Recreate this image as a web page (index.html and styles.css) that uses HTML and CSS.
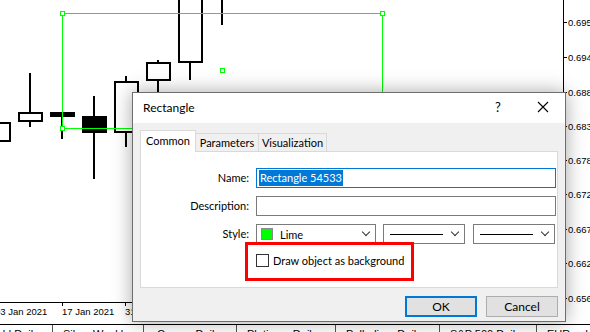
FILE: index.html
```html
<!DOCTYPE html>
<html lang="en">
<head>
	<meta charset="UTF-8">
	<title>Rectangle</title>
	<link rel="stylesheet" href="styles.css">
</head>
<body>
	<!-- chart -->
	<div class="chart">
		<svg class="plot" width="590" height="332" viewBox="0 0 590 332">
			<g class="candles" stroke="#000" stroke-width="2" fill="#fff">
				<rect x="-10" y="123" width="20" height="18"/>
				<line x1="30" y1="73" x2="30" y2="127"/>
				<rect x="19" y="113" width="23" height="8"/>
				<line x1="62" y1="113" x2="62" y2="139"/>
				<rect x="51" y="113" width="23" height="3" fill="#000"/>
				<line x1="94" y1="96" x2="94" y2="179"/>
				<rect x="83" y="117" width="23" height="15" fill="#000"/>
				<line x1="126" y1="76" x2="126" y2="147"/>
				<rect x="115" y="82" width="23" height="50"/>
				<line x1="158" y1="60" x2="158" y2="100"/>
				<rect x="147" y="63" width="23" height="17"/>
				<line x1="190" y1="0" x2="190" y2="80"/>
				<rect x="179" y="-5" width="23" height="67"/>
				<line x1="222" y1="0" x2="222" y2="25"/>
			</g>
			<g class="shape" stroke="#00ff00" stroke-width="1" fill="none">
				<rect x="62.5" y="13.5" width="320" height="115"/>
				<rect x="60.5" y="11.5" width="4" height="4" fill="#fff"/>
				<rect x="380.5" y="11.5" width="4" height="4" fill="#fff"/>
				<rect x="60.5" y="126.5" width="4" height="4" fill="#fff"/>
				<rect x="220.5" y="68.5" width="4" height="4" fill="#fff"/>
			</g>
			<g class="axes" stroke="#000" stroke-width="1">
				<line x1="563.5" y1="0" x2="563.5" y2="302"/>
				<line x1="0" y1="302.5" x2="564" y2="302.5"/>
				<line x1="62.5" y1="302" x2="62.5" y2="306"/>
				<line x1="125.5" y1="302" x2="125.5" y2="306"/>
				<line x1="564" y1="22.5" x2="567" y2="22.5"/>
				<line x1="564" y1="57.5" x2="567" y2="57.5"/>
				<line x1="564" y1="92.5" x2="567" y2="92.5"/>
				<line x1="564" y1="126.5" x2="567" y2="126.5"/>
				<line x1="564" y1="160.5" x2="567" y2="160.5"/>
				<line x1="564" y1="194.5" x2="567" y2="194.5"/>
				<line x1="564" y1="229.5" x2="567" y2="229.5"/>
				<line x1="564" y1="263.5" x2="567" y2="263.5"/>
				<line x1="564" y1="298.5" x2="567" y2="298.5"/>
			</g>
			<g class="labels">
				<text x="568" y="26">0.695</text>
				<text x="568" y="61">0.694</text>
				<text x="568" y="96">0.688</text>
				<text x="568" y="130">0.683</text>
				<text x="568" y="164">0.678</text>
				<text x="568" y="198">0.672</text>
				<text x="568" y="233">0.667</text>
				<text x="568" y="267">0.662</text>
				<text x="568" y="302">0.656</text>
				<text x="-5" y="315">03 Jan 2021</text>
				<text x="62" y="315">17 Jan 2021</text>
				<text x="125" y="315">31 Jan 2021</text>
			</g>
		</svg>
		<!-- symbol tabs -->
		<div class="symbols">
			<span class="sym first">Gold,Daily</span>
			<span class="sym">Silver,Weekly</span>
			<span class="sym">Copper,Daily</span>
			<span class="sym">Platinum,Daily</span>
			<span class="sym">Palladium,Daily</span>
			<span class="sym">S&amp;P 500,Daily</span>
			<span class="sym">EURusd,H1</span>
		</div>
	</div>

	<!-- dialog -->
	<div class="dialog">
		<div class="titlebar">
			<span class="title">Rectangle</span>
			<span class="help">?</span>
			<svg class="close" width="12" height="12" viewBox="0 0 12 12"><path d="M1 1L11 11M11 1L1 11" stroke="#000" stroke-width="1.1"/></svg>
		</div>
		<div class="dbody">
			<div class="tabs">
				<div class="tab active">Common</div>
				<div class="tab">Parameters</div>
				<div class="tab">Visualization</div>
			</div>
			<div class="panel">
				<div class="form">
					<label>Name:</label>
					<div class="input focus"><span class="sel">Rectangle 54533</span></div>
					<label>Description:</label>
					<div class="input"></div>
					<label>Style:</label>
					<div class="styles">
						<div class="combo color"><span class="swatch"></span><span class="cname">Lime</span><span class="chev"></span></div>
						<div class="combo line"><span class="stroke"></span><span class="chev"></span></div>
						<div class="combo line2"><span class="stroke"></span><span class="chev"></span></div>
					</div>
					<span></span>
					<div class="check"><span class="box"></span>Draw object as background</div>
				</div>
				<div class="mark"></div>
			</div>
			<div class="buttons">
				<div class="btn ok">OK</div>
				<div class="btn">Cancel</div>
			</div>
		</div>
	</div>
</body>
</html>
```
FILE: styles.css
```css
body{
	margin:0;
	width:590px;
	height:332px;
	overflow:hidden;
	background:#fff;
	font-family:Lato,"Liberation Sans",sans-serif;
}
.chart{
	position:relative;
	width:590px;
	height:332px;
}
.plot{
	display:block;
	position:absolute;
	left:0;
	top:0;
}
.labels text{
	font-family:"Liberation Sans",Arial,sans-serif;
	font-size:9.5px;
	fill:#000;
}
.symbols{
	position:absolute;
	left:0;
	top:324px;
	width:590px;
	height:8px;
	border-top:1px solid #000;
	display:flex;
	font-family:"Liberation Sans",Arial,sans-serif;
	font-size:11px;
	overflow:hidden;
}
.sym{
	flex:none;
	box-sizing:border-box;
	padding:3px 0 0 10px;
	border-left:1px solid #555;
	height:20px;
	white-space:nowrap;
	overflow:hidden;
}
.sym.first{
	width:52px;
	border-left:none;
	padding-left:0;
	text-indent:-12px;
}
.sym:nth-child(2){width:91px;}
.sym:nth-child(3){width:93px;padding-left:13px;}
.sym:nth-child(4){width:99px;}
.sym:nth-child(5){width:104px;}
.sym:nth-child(6){width:97px;}
.sym:nth-child(7){width:60px;}

/* dialog */
.dialog{
	position:absolute;
	left:132px;
	top:92px;
	width:432px;
	height:228px;
	border:1px solid #6e6e6e;
	background:#f0f0f0;
	box-shadow:0 0 18px rgba(0,0,0,0.35);
	font-size:11px;
	color:#000;
	display:flex;
	flex-direction:column;
}
.titlebar{
	height:30px;
	background:#fff;
	display:flex;
	align-items:center;
	padding:0 0 0 10px;
}
.title{
	flex:1;
	font-size:12px;
	margin-top:-2px;
}
.help{
	width:12px;
	margin-right:30px;
	font-size:13px;
	margin-top:-2px;
}
.close{
	margin-right:16px;
	margin-top:-2px;
}
.dbody{
	padding:7px 7px 0 7px;
}
.tabs{
	display:flex;
	align-items:flex-end;
	height:21px;
}
.tab{
	box-sizing:border-box;
	height:18px;
	border:1px solid #d9d9d9;
	border-bottom:none;
	background:#f0f0f0;
	line-height:17px;
	text-align:center;
	margin-left:-1px;
}
.tab:nth-child(2){width:64px;}
.tab:nth-child(3){width:69px;}
.tab.active{
	width:56px;
	height:22px;
	margin-left:0;
	background:#fff;
	line-height:19px;
	position:relative;
	z-index:1;
	margin-bottom:-1px;
}
.panel{
	position:relative;
	height:135px;
	background:#fff;
	border:1px solid #d9d9d9;
}
.form{
	display:grid;
	grid-template-columns:108px 1fr;
	column-gap:7px;
	grid-auto-rows:20px;
	row-gap:8px;
	padding:16px 7px 0 0;
	align-items:center;
}
.form label{
	text-align:right;
	color:#000;
	margin-top:-2px;
}
.input{
	height:18px;
	border:1px solid #7a7a7a;
	display:flex;
	align-items:center;
	padding-left:2px;
}
.input.focus{
	border-color:#0078d7;
}
.sel{
	background:#0078d7;
	color:#fff;
	line-height:16px;
	padding:0 1px;
}
.styles{
	display:flex;
	gap:7px;
	width:300px;
}
.combo{
	flex:none;
	height:18px;
	border:1px solid #7a7a7a;
	display:flex;
	align-items:center;
	position:relative;
}
.combo.color{width:118px;}
.combo.line{width:80px;}
.combo.line2{width:80px;margin-left:1px;}
.swatch{
	width:12px;
	height:12px;
	margin-left:4px;
	background:#00ff00;
	border:1px solid #8a8a8a;
	box-sizing:border-box;
}
.cname{
	margin-left:7px;
}
.stroke{
	width:53px;
	height:1px;
	background:#000;
	margin-left:6px;
}
.chev{
	position:absolute;
	right:6px;
	top:4px;
	width:5px;
	height:5px;
	border-right:1px solid #333;
	border-bottom:1px solid #333;
	transform:rotate(45deg);
}
.check{
	display:flex;
	align-items:center;
	gap:4px;
	margin-top:-3px;
}
.box{
	width:11px;
	height:11px;
	border:1px solid #333;
	background:#fff;
}
.mark{
	position:absolute;
	left:104px;
	top:90px;
	width:163px;
	height:33px;
	border:3px solid #ff0000;
}
.buttons{
	display:flex;
	justify-content:flex-end;
	gap:9px;
	padding-top:8px;
}
.btn{
	width:70px;
	height:19px;
	border:1px solid #adadad;
	background:#e1e1e1;
	text-align:center;
	line-height:19px;
	font-size:12px;
}
.btn.ok{
	width:68px;
	height:17px;
	line-height:17px;
	border:2px solid #0078d7;
}
```
